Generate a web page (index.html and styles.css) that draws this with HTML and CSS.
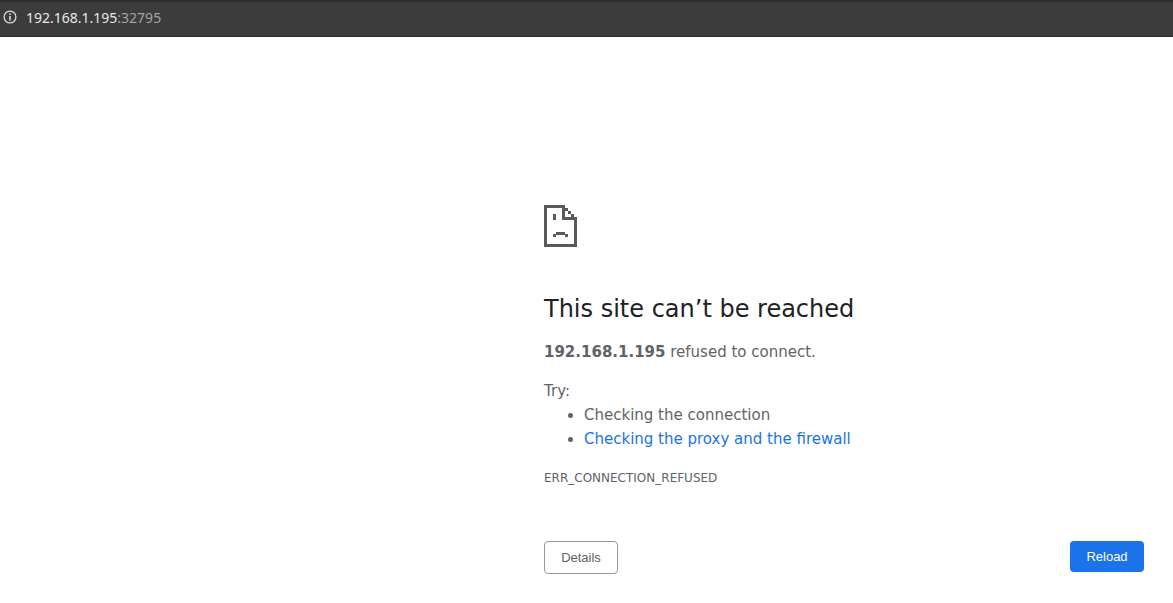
FILE: index.html
```html
<!DOCTYPE html>
<html lang="en">
<head>
  <meta charset="UTF-8" />
  <title>192.168.1.195</title>
  <link rel="stylesheet" href="styles.css">
</head>
<body>

  <!-- Address bar -->
  <div class="toolbar">
    <svg class="info-icon" width="14" height="14" viewBox="0 0 14 14">
      <circle cx="7" cy="7" r="5.9" fill="none" stroke="#d8d8d8" stroke-width="1.3"/>
      <rect x="6.2" y="6" width="1.6" height="4.6" fill="#d8d8d8"/>
      <rect x="6.2" y="3.4" width="1.6" height="1.6" fill="#d8d8d8"/>
    </svg>
    <span class="url">192.168.1.195<span class="port">:32795</span></span>
  </div>

  <!-- Error page -->
  <div class="page">
    <svg class="sad-file" width="33" height="42" viewBox="0 0 33 42" shape-rendering="crispEdges">
      <path fill="#5a5a5a" fill-rule="evenodd" d="M0 0H21V3H24V6H27V9H30V12H33V42H0ZM3 3V39H30V15H18V3ZM21 6V12H30V12H27V9H24V6Z"/>
      <path fill="#5a5a5a" d="M9 9H12V15H9ZM12 27H21V29H24V32H21V30H12V32H9V29H12Z"/>
    </svg>

    <h1>This site can’t be reached</h1>
    <p class="summary"><strong>192.168.1.195</strong> refused to connect.</p>

    <p class="try">Try:</p>
    <ul class="suggestions">
      <li>Checking the connection</li>
      <li><a href="#">Checking the proxy and the firewall</a></li>
    </ul>

    <div class="error-code">ERR_CONNECTION_REFUSED</div>

    <div class="button-row">
      <button class="details-button">Details</button>
      <button class="reload-button">Reload</button>
    </div>
  </div>

</body>
</html>
```

FILE: styles.css
```css
*, *::before, *::after {
  box-sizing: border-box;
}

body, html {
  margin: 0;
  padding: 0;
  width: 100%;
  height: 100%;
  background: #fff;
  overflow: hidden;
}

.toolbar {
  display: flex;
  align-items: center;
  height: 37px;
  padding: 0 0 4px 3px;
  background: #3c3c3c;
  border-top: 2px solid #2c2c2c;
  border-bottom: 1px solid #2c2c2c;
}

.info-icon {
  margin-right: 9px;
}

.url {
  font-family: 'Noto Sans', sans-serif;
  font-size: 14px;
  color: #e8e8e8;
}

.port {
  color: #a3a3a3;
}

.page {
  display: flex;
  flex-direction: column;
  align-items: flex-start;
  padding: 168px 29px 0 544px;
  font-family: 'DejaVu Sans', sans-serif;
  color: #5f6368;
}

.sad-file {
  display: block;
  margin-bottom: 48px;
}

h1 {
  margin: 0 0 17px;
  font-size: 24px;
  font-weight: 400;
  line-height: 28px;
  color: #202124;
}

.summary {
  margin: 0 0 17px;
  font-size: 15px;
  line-height: 24px;
}

.try {
  margin: 0 0 1px;
  font-size: 15px;
  line-height: 21px;
}

.suggestions {
  margin: 0 0 19px;
  padding-left: 40px;
  font-size: 15px;
  line-height: 24px;
}

a {
  color: #1a73e8;
  text-decoration: none;
}

.error-code {
  font-size: 12px;
  line-height: 16px;
  margin-bottom: 55px;
}

.button-row {
  display: flex;
  justify-content: space-between;
  align-items: flex-start;
  width: 100%;
}

button {
  font-family: 'Liberation Sans', sans-serif;
  font-size: 13px;
  border-radius: 4px;
  cursor: pointer;
}

.details-button {
  width: 74px;
  height: 33px;
  background: #fff;
  border: 1px solid #9a9a9a;
  color: #5f6368;
}

.reload-button {
  width: 74px;
  height: 31px;
  background: #1a73e8;
  border: none;
  color: #fff;
}
```
